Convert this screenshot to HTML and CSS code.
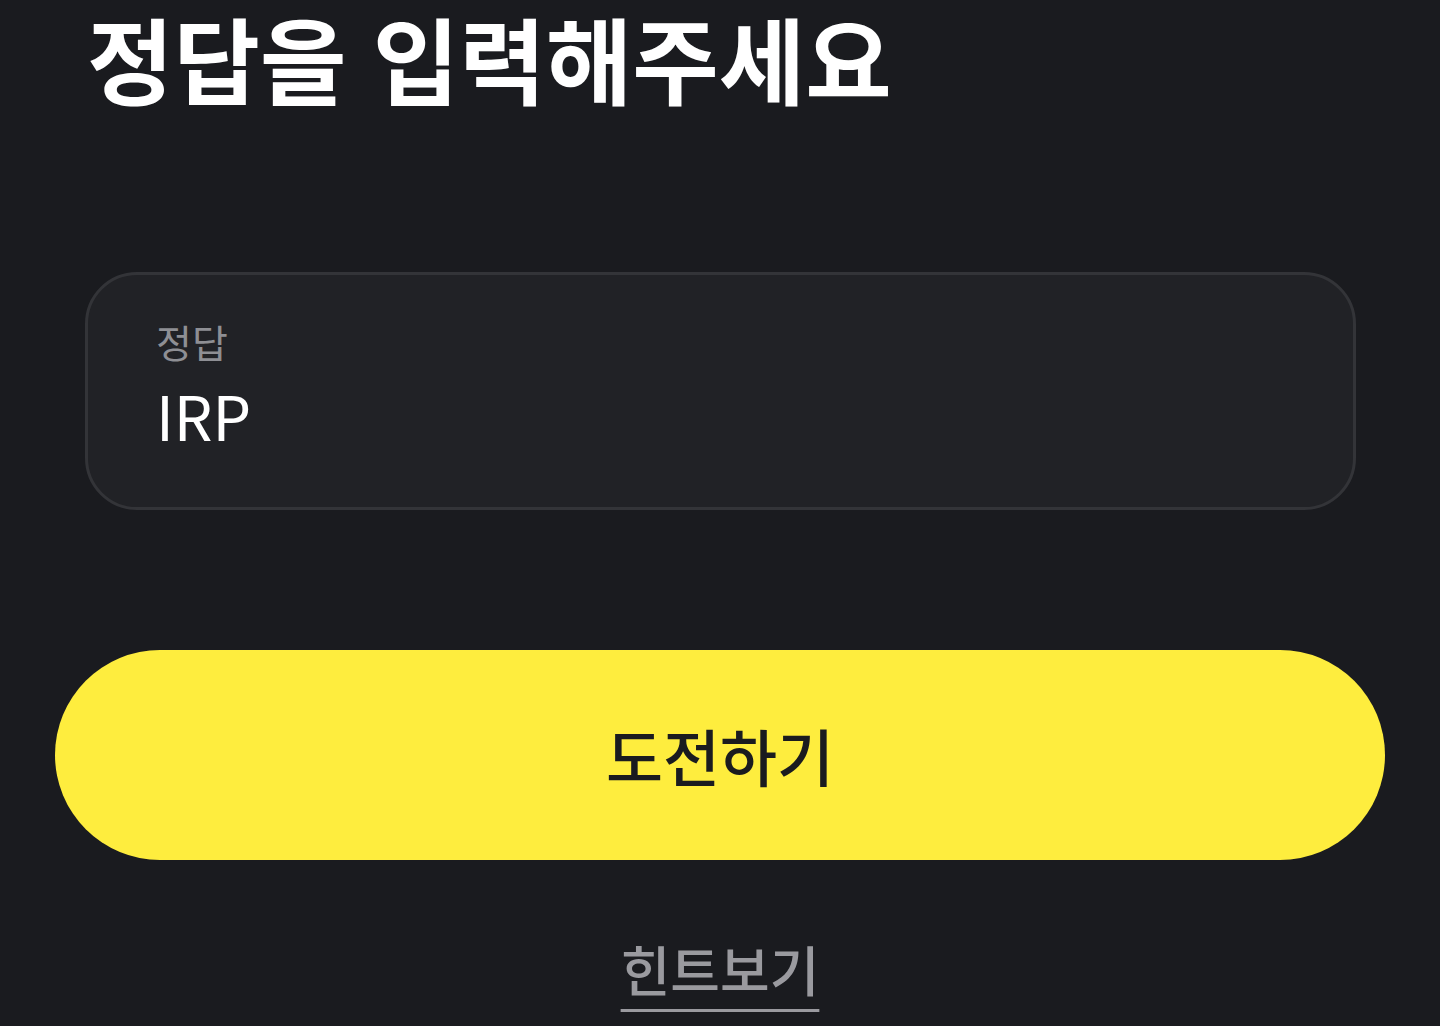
FILE: index.html
```html
<!DOCTYPE html>
<html lang="ko">
  <head>
    <meta charset="utf-8" />
    <title>정답 입력</title>
    <link rel="stylesheet" href="styles.css">
  </head>
  <body>
    <main class="answer-page">
      <h1 class="page-title">정답을 입력해주세요</h1>
      <label class="answer-field">
        <span class="answer-label">정답</span>
        <input class="answer-input" type="text" value="IRP" />
      </label>
      <button class="submit-btn" type="button">도전하기</button>
      <a href="#" class="hint-link">힌트보기</a>
    </main>
  </body>
</html>
```

FILE: styles.css
```css
body,
h1,
a,
label,
button,
input {
  margin: 0;
  padding: 0;
  font-family: "Noto Sans CJK KR", "Noto Sans", sans-serif;
  box-sizing: border-box;
}

body {
  background-color: #1a1b1f;
  height: 1026px;
  overflow: hidden;
}

.answer-page {
  display: flex;
  flex-direction: column;
  padding: 0 55px;
}

.page-title {
  color: #ffffff;
  font-size: 94px;
  font-weight: 700;
  line-height: 114px;
  padding-left: 32px;
}

.answer-field {
  display: flex;
  flex-direction: column;
  margin: 158px 29px 0 30px;
  height: 238px;
  padding: 38px 68px 0;
  background-color: #212226;
  border: 3px solid #333438;
  border-radius: 52px;
}
.answer-label {
  color: #8e8f94;
  font-size: 39px;
  line-height: 56px;
}
.answer-input {
  margin-top: 6px;
  background: transparent;
  border: none;
  outline: none;
  color: #ffffff;
  font-size: 61px;
  line-height: 80px;
  height: 80px;
}

.submit-btn {
  margin-top: 140px;
  height: 210px;
  border: none;
  border-radius: 105px;
  background-color: #feed3e;
  color: #1a1b1f;
  font-size: 62px;
  font-weight: 500;
}

.hint-link {
  align-self: center;
  margin-top: 77px;
  color: #9a9a9f;
  font-size: 54px;
  font-weight: 500;
  line-height: 64px;
  text-decoration: underline;
  text-underline-offset: 17px;
  text-decoration-thickness: 3px;
}
```
